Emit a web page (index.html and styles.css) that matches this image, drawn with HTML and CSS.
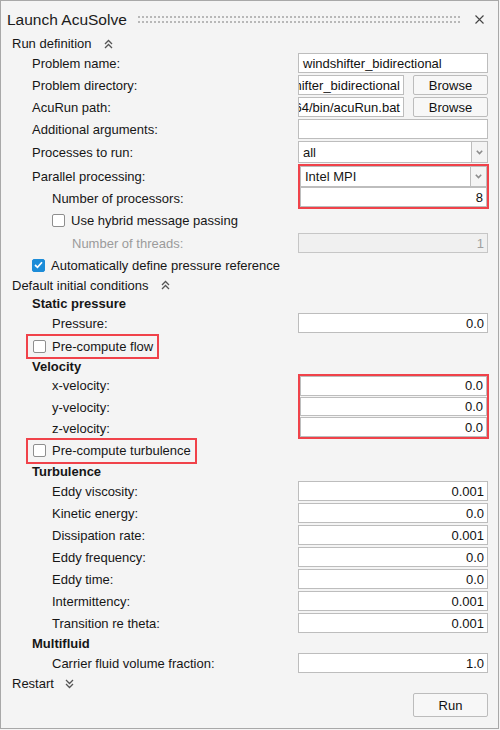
FILE: index.html
```html
<!DOCTYPE html>
<html>
<head>
<meta charset="utf-8">
<link rel="stylesheet" href="styles.css">
</head>
<body>
<div class="window">
  <div class="titlebar">
    <span class="title">Launch AcuSolve</span>
    <svg class="grip" height="8" preserveAspectRatio="none">
      <defs><pattern id="dots" width="4" height="5" patternUnits="userSpaceOnUse"><rect x="0" y="0" width="2" height="2" fill="#b8b8b8"/></pattern></defs>
      <rect x="0" y="0" width="100%" height="7" fill="url(#dots)"/>
    </svg>
    <svg class="close" width="9" height="9" viewBox="0 0 9 9"><path d="M0.5 0.5 L8.5 8.5 M8.5 0.5 L0.5 8.5" stroke="#444" stroke-width="1.1" fill="none"/></svg>
  </div>

  <div class="section h17"><span>Run definition</span><svg class="chev" width="9" height="10" viewBox="0 0 9 10"><path d="M1 5 L4.5 1.5 L8 5 M1 9 L4.5 5.5 L8 9" stroke="#555" stroke-width="1.3" fill="none"/></svg></div>

  <div class="row"><span class="lbl l1">Problem name:</span><div class="field"><div class="input left">windshifter_bidirectional</div></div></div>
  <div class="row"><span class="lbl l1">Problem directory:</span><div class="field split"><div class="input left clip"><span class="rtl">windshifter_bidirectional</span></div><div class="btn browse">Browse</div></div></div>
  <div class="row"><span class="lbl l1">AcuRun path:</span><div class="field split"><div class="input left clip"><span class="rtl">C:/AcuSolve/win64/bin/acuRun.bat</span></div><div class="btn browse">Browse</div></div></div>
  <div class="row"><span class="lbl l1">Additional arguments:</span><div class="field"><div class="input left"></div></div></div>
  <div class="row h24"><span class="lbl l1">Processes to run:</span><div class="field"><div class="combo"><div class="ctext">all</div><div class="cbtn"><svg width="7" height="5" viewBox="0 0 7 5"><path d="M0.8 0.8 L3.5 3.5 L6.2 0.8" stroke="#8c8c8c" stroke-width="1.6" fill="none"/></svg></div></div></div></div>

  <div class="group g45">
    <div class="labels">
      <div class="glbl h24"><span class="l1">Parallel processing:</span></div>
      <div class="glbl h21"><span class="l2">Number of processors:</span></div>
    </div>
    <div class="redbox field">
      <div class="combo in"><div class="ctext">Intel MPI</div><div class="cbtn"><svg width="7" height="5" viewBox="0 0 7 5"><path d="M0.8 0.8 L3.5 3.5 L6.2 0.8" stroke="#8c8c8c" stroke-width="1.6" fill="none"/></svg></div></div>
      <div class="input right in20">8</div>
    </div>
  </div>

  <div class="row h23"><span class="chk l2"><span class="box"></span>Use hybrid message passing</span></div>
  <div class="row"><span class="lbl l3 dis">Number of threads:</span><div class="field"><div class="input right disabled">1</div></div></div>
  <div class="row"><span class="chk l1"><span class="box on"><svg width="9" height="8" viewBox="0 0 9 8"><path d="M1 4 L3.5 6.3 L8 1.3" stroke="#fff" stroke-width="1.7" fill="none"/></svg></span>Automatically define pressure reference</span></div>

  <div class="section h18"><span>Default initial conditions</span><svg class="chev" width="9" height="10" viewBox="0 0 9 10"><path d="M1 5 L4.5 1.5 L8 5 M1 9 L4.5 5.5 L8 9" stroke="#555" stroke-width="1.3" fill="none"/></svg></div>
  <div class="sub h18">Static pressure</div>
  <div class="row"><span class="lbl l2">Pressure:</span><div class="field"><div class="input right">0.0</div></div></div>
  <div class="row h24"><span class="chk l1 boxed"><span class="box"></span>Pre-compute flow</span></div>
  <div class="sub h16">Velocity</div>

  <div class="group g65">
    <div class="labels">
      <div class="glbl h22"><span class="l2">x-velocity:</span></div>
      <div class="glbl h22"><span class="l2">y-velocity:</span></div>
      <div class="glbl h21"><span class="l2">z-velocity:</span></div>
    </div>
    <div class="redbox field stack">
      <div class="input right in20">0.0</div>
      <div class="input right in20">0.0</div>
      <div class="input right in20">0.0</div>
    </div>
  </div>

  <div class="row h24"><span class="chk l1 boxed tb"><span class="box"></span>Pre-compute turbulence</span></div>
  <div class="sub h17">Turbulence</div>
  <div class="row"><span class="lbl l2">Eddy viscosity:</span><div class="field"><div class="input right">0.001</div></div></div>
  <div class="row"><span class="lbl l2">Kinetic energy:</span><div class="field"><div class="input right">0.0</div></div></div>
  <div class="row"><span class="lbl l2">Dissipation rate:</span><div class="field"><div class="input right">0.001</div></div></div>
  <div class="row"><span class="lbl l2">Eddy frequency:</span><div class="field"><div class="input right">0.0</div></div></div>
  <div class="row"><span class="lbl l2">Eddy time:</span><div class="field"><div class="input right">0.0</div></div></div>
  <div class="row"><span class="lbl l2">Intermittency:</span><div class="field"><div class="input right">0.001</div></div></div>
  <div class="row"><span class="lbl l2">Transition re theta:</span><div class="field"><div class="input right">0.001</div></div></div>
  <div class="sub h18">Multifluid</div>
  <div class="row"><span class="lbl l2">Carrier fluid volume fraction:</span><div class="field"><div class="input right">1.0</div></div></div>

  <div class="section h19"><span>Restart</span><svg class="chev rs" width="9" height="10" viewBox="0 0 9 10"><path d="M1 1 L4.5 4.5 L8 1 M1 5 L4.5 8.5 L8 5" stroke="#555" stroke-width="1.3" fill="none"/></svg></div>
  <div class="footer"><div class="btn run">Run</div></div>
</div>
</body>
</html>
```

FILE: styles.css
```css
html, body {
  margin: 0;
  padding: 0;
  background: #f4f4f4;
}
body {
  font-family: "Liberation Sans", Arial, sans-serif;
  font-size: 13px;
  color: #161616;
}
.window {
  box-sizing: border-box;
  width: 499px;
  height: 729px;
  border: 1px solid #a8a8a8;
  background: #f4f4f4;
  padding-right: 10px;
}
.titlebar {
  height: 34px;
  display: flex;
  align-items: center;
  padding-left: 6px;
}
.title {
  font-size: 15.5px;
  color: #1b1b1b;
  padding-top: 3px;
}
.grip {
  flex: 1;
  height: 7px;
  margin: 2px 15px 0 11px;
}
.close {
  margin-right: 4px;
  margin-top: 2px;
}
.section {
  display: flex;
  align-items: center;
  padding-left: 11px;
}
.section .chev {
  margin-left: 12px;
}
.section .chev.rs {
  margin-left: 11px;
}
.sub {
  display: flex;
  align-items: center;
  padding-left: 31px;
  font-weight: bold;
}
.h16 { height: 16px; }
.h17 { height: 17px; }
.h18 { height: 18px; }
.h19 { height: 19px; }
.h21 { height: 21px; }
.h22 { height: 22px; }
.h23 { height: 23px; }
.h24 { height: 24px; }
.row {
  display: flex;
  align-items: center;
  height: 22px;
}
.row.h23 { height: 23px; }
.row.h24 { height: 24px; }
.lbl {
  flex: 1;
}
.l1 { padding-left: 31px; }
.l2 { padding-left: 51px; }
.l3 { padding-left: 71px; }
.dis { color: #9b9b9b; }
.field {
  width: 190px;
  margin-left: auto;
  box-sizing: border-box;
}
.field.split {
  display: flex;
  gap: 9px;
}
.input {
  box-sizing: border-box;
  height: 20px;
  border: 1px solid #bdbdbd;
  background: #fff;
  display: flex;
  align-items: center;
  padding: 0 3px;
  white-space: nowrap;
  overflow: hidden;
  color: #111;
}
.input.left { justify-content: flex-start; padding-left: 4px; }
.input.right { justify-content: flex-end; padding-right: 3px; }
.input.clip { flex: 1; justify-content: flex-end; min-width: 0; }
.input.clip .rtl { flex: none; }
.input.disabled {
  background: #f0f0f0;
  border-color: #c6c6c6;
  color: #a0a0a0;
}
.btn {
  box-sizing: border-box;
  border: 1px solid #bcbcbc;
  border-radius: 2px;
  background: #f7f7f7;
  display: flex;
  align-items: center;
  justify-content: center;
  color: #111;
}
.btn.browse {
  width: 75px;
  height: 20px;
}
.combo {
  display: flex;
  height: 22px;
}
.combo .ctext {
  flex: 1;
  box-sizing: border-box;
  border: 1px solid #bdbdbd;
  background: #fff;
  display: flex;
  align-items: center;
  padding-left: 4px;
}
.combo .cbtn {
  width: 16px;
  box-sizing: border-box;
  border: 1px solid #bdbdbd;
  border-left: none;
  background: #f4f4f4;
  display: flex;
  align-items: center;
  justify-content: center;
}
.combo.in { height: 21px; }
.group {
  display: flex;
}
.g45 { height: 45px; }
.g65 { height: 65px; }
.labels {
  flex: 1;
  display: flex;
  flex-direction: column;
}
.glbl {
  display: flex;
  align-items: center;
}
.redbox {
  margin-right: -1px;
  width: 191px;
  margin-left: -1px;
  border: 2px solid #f0424a;
  display: flex;
  flex-direction: column;
}
.redbox .in20 { height: 20px; }
.redbox.stack { gap: 1px; }
.chk {
  display: flex;
  align-items: center;
  gap: 6px;
}
.box {
  box-sizing: border-box;
  width: 13px;
  height: 13px;
  border: 1px solid #8e8e8e;
  border-radius: 2px;
  background: #fff;
  display: flex;
  align-items: center;
  justify-content: center;
}
.box.on {
  background: #1c8cd8;
  border-color: #1c8cd8;
}
.chk.boxed {
  margin-left: 25px;
  padding: 0 4px 0 5px;
  height: 21px;
  border: 2px solid #f0424a;
}
.chk.tb { height: 22px; margin-top: -1px; }
.footer {
  display: flex;
  justify-content: flex-end;
}
.btn.run {
  width: 75px;
  height: 24px;
}
```
